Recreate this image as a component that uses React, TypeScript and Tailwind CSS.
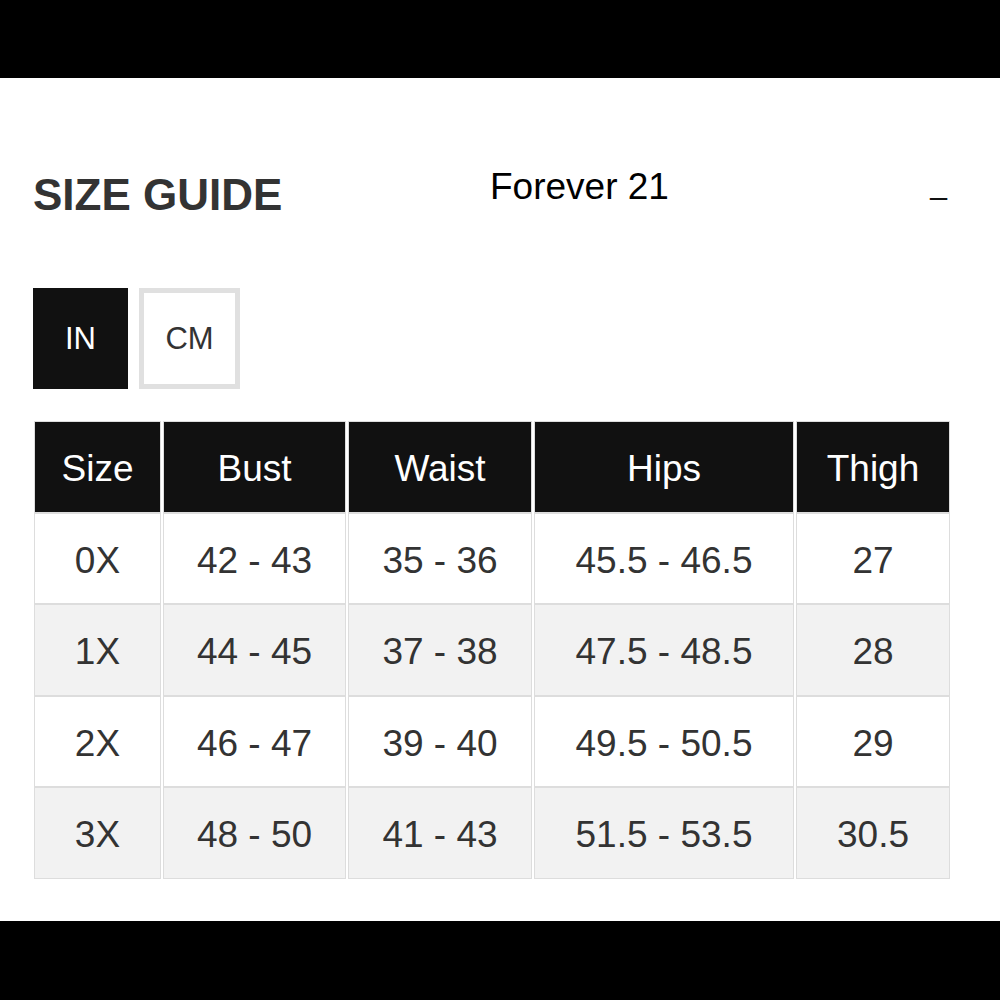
import React from "react";

const headers = ["Size", "Bust", "Waist", "Hips", "Thigh"];
const rows = [
  ["0X", "42 - 43", "35 - 36", "45.5 - 46.5", "27"],
  ["1X", "44 - 45", "37 - 38", "47.5 - 48.5", "28"],
  ["2X", "46 - 47", "39 - 40", "49.5 - 50.5", "29"],
  ["3X", "48 - 50", "41 - 43", "51.5 - 53.5", "30.5"],
];
const rowHeights = ["h-[91px]", "h-[92px]", "h-[91px]", "h-[92px]"];

export default function App() {
  return (
    <div
      className="w-[1000px] h-[1000px] flex flex-col bg-white"
      style={{ fontFamily: '"Liberation Sans", Arial, Helvetica, sans-serif' }}
    >
      <div className="h-[78px] bg-black shrink-0" />
      <div className="h-[843px] shrink-0 px-[33px] pt-[89px] flex flex-col">
        <div className="flex items-start">
          <div className="w-[457px] shrink-0 mt-[6px] text-[44px] leading-[44px] font-bold text-[#333333]">
            SIZE GUIDE
          </div>
          <div className="mt-[1px] text-[37px] leading-[37px] text-black">Forever 21</div>
          <div className="ml-auto mr-[20px] mt-[2px] text-[30px] leading-[30px] text-[#111111]">_</div>
        </div>
        <div className="mt-[71px] flex gap-[11px]">
          <div className="w-[95px] h-[101px] pt-[2px] bg-[#111111] text-white text-[31px] flex items-center justify-center">
            IN
          </div>
          <div className="w-[101px] h-[101px] pt-[2px] border-[5px] border-[#e0e0e0] bg-white text-[#333333] text-[31px] flex items-center justify-center">
            CM
          </div>
        </div>
        <div className="mt-[32px] ml-[1px] grid grid-cols-[127px_183px_184px_260px_154px] gap-x-[2px] w-[916px]">
          {headers.map((h) => (
            <div
              key={h}
              className="h-[92px] pt-[4px] bg-[#111111] border border-[#dddddd] text-white text-[37px] flex items-center justify-center"
            >
              {h}
            </div>
          ))}
          {rows.map((r, i) =>
            r.map((c, j) => (
              <div
                key={`${i}-${j}`}
                className={`${rowHeights[i]} ${i % 2 === 1 ? "bg-[#f2f2f2]" : "bg-white"} pt-[4px] border border-[#dddddd] text-[#333333] text-[37px] flex items-center justify-center`}
              >
                {c}
              </div>
            ))
          )}
        </div>
      </div>
      <div className="flex-1 bg-black" />
    </div>
  );
}
